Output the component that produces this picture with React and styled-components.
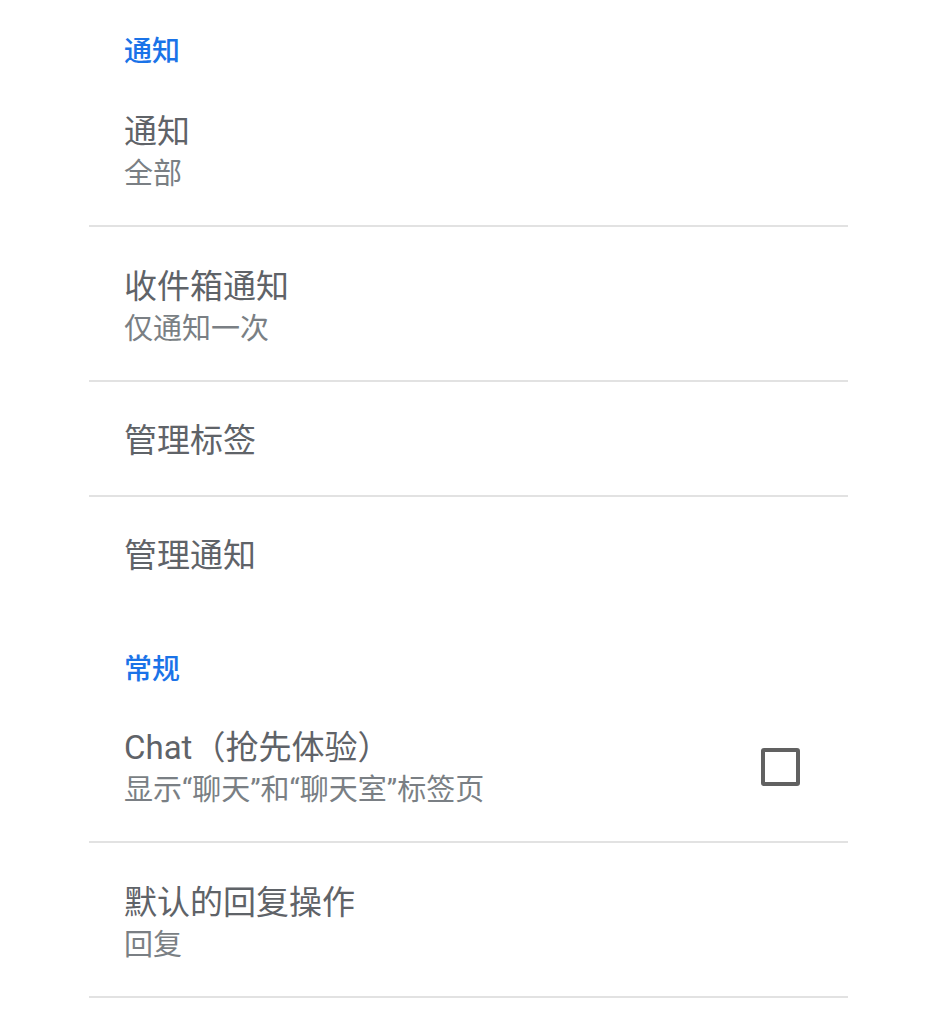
import React from 'react';
import styled, { createGlobalStyle } from 'styled-components';

const GlobalStyle = createGlobalStyle`
  html, body {
    margin: 0;
    padding: 0;
    background: #ffffff;
  }
  body {
    font-family: Roboto, "Noto Sans CJK SC", "Noto Sans", sans-serif;
  }
`;

const Page = styled.div`
  width: 929px;
  min-height: 1019px;
  background: #fff;
  padding: 0 81px 0 89px;
  box-sizing: border-box;
`;

const Header = styled.div`
  padding: ${p => (p.$first ? '34px 35px 2px' : '42px 35px 0')};
  height: 36px;
  line-height: 36px;
  font-size: 28px;
  font-weight: 500;
  color: #1a73e8;
`;

const Row = styled.div`
  display: flex;
  align-items: center;
  justify-content: space-between;
  padding: ${p => (p.$single ? '37px 48px 32px 35px' : '38px 48px 31px 35px')};
  border-bottom: ${p => (p.$last ? 'none' : '2px solid #e2e2e2')};
`;

const Texts = styled.div`
  display: flex;
  flex-direction: column;
`;

const Title = styled.div`
  font-size: 33px;
  line-height: 44px;
  color: #5f6368;
`;

const Subtitle = styled.div`
  font-size: 29px;
  line-height: 40px;
  color: #7a7f84;
`;

const Checkbox = styled.div`
  width: 39px;
  height: 38px;
  margin-top: -2px;
  box-sizing: border-box;
  border: 4px solid #616161;
  border-radius: 3px;
`;

const settings = [
  {
    header: '通知',
    items: [
      { title: '通知', sub: '全部' },
      { title: '收件箱通知', sub: '仅通知一次' },
      { title: '管理标签' },
      { title: '管理通知', last: true },
    ],
  },
  {
    header: '常规',
    items: [
      { title: 'Chat（抢先体验）', sub: '显示“聊天”和“聊天室”标签页', checkbox: true },
      { title: '默认的回复操作', sub: '回复' },
    ],
  },
];

export default function App() {
  return (
    <>
      <GlobalStyle />
      <Page>
        {settings.map((section, i) => (
          <div key={section.header}>
            <Header $first={i === 0}>{section.header}</Header>
            {section.items.map(item => (
              <Row key={item.title} $single={!item.sub} $last={item.last}>
                <Texts>
                  <Title>{item.title}</Title>
                  {item.sub && <Subtitle>{item.sub}</Subtitle>}
                </Texts>
                {item.checkbox && <Checkbox />}
              </Row>
            ))}
          </div>
        ))}
      </Page>
    </>
  );
}
